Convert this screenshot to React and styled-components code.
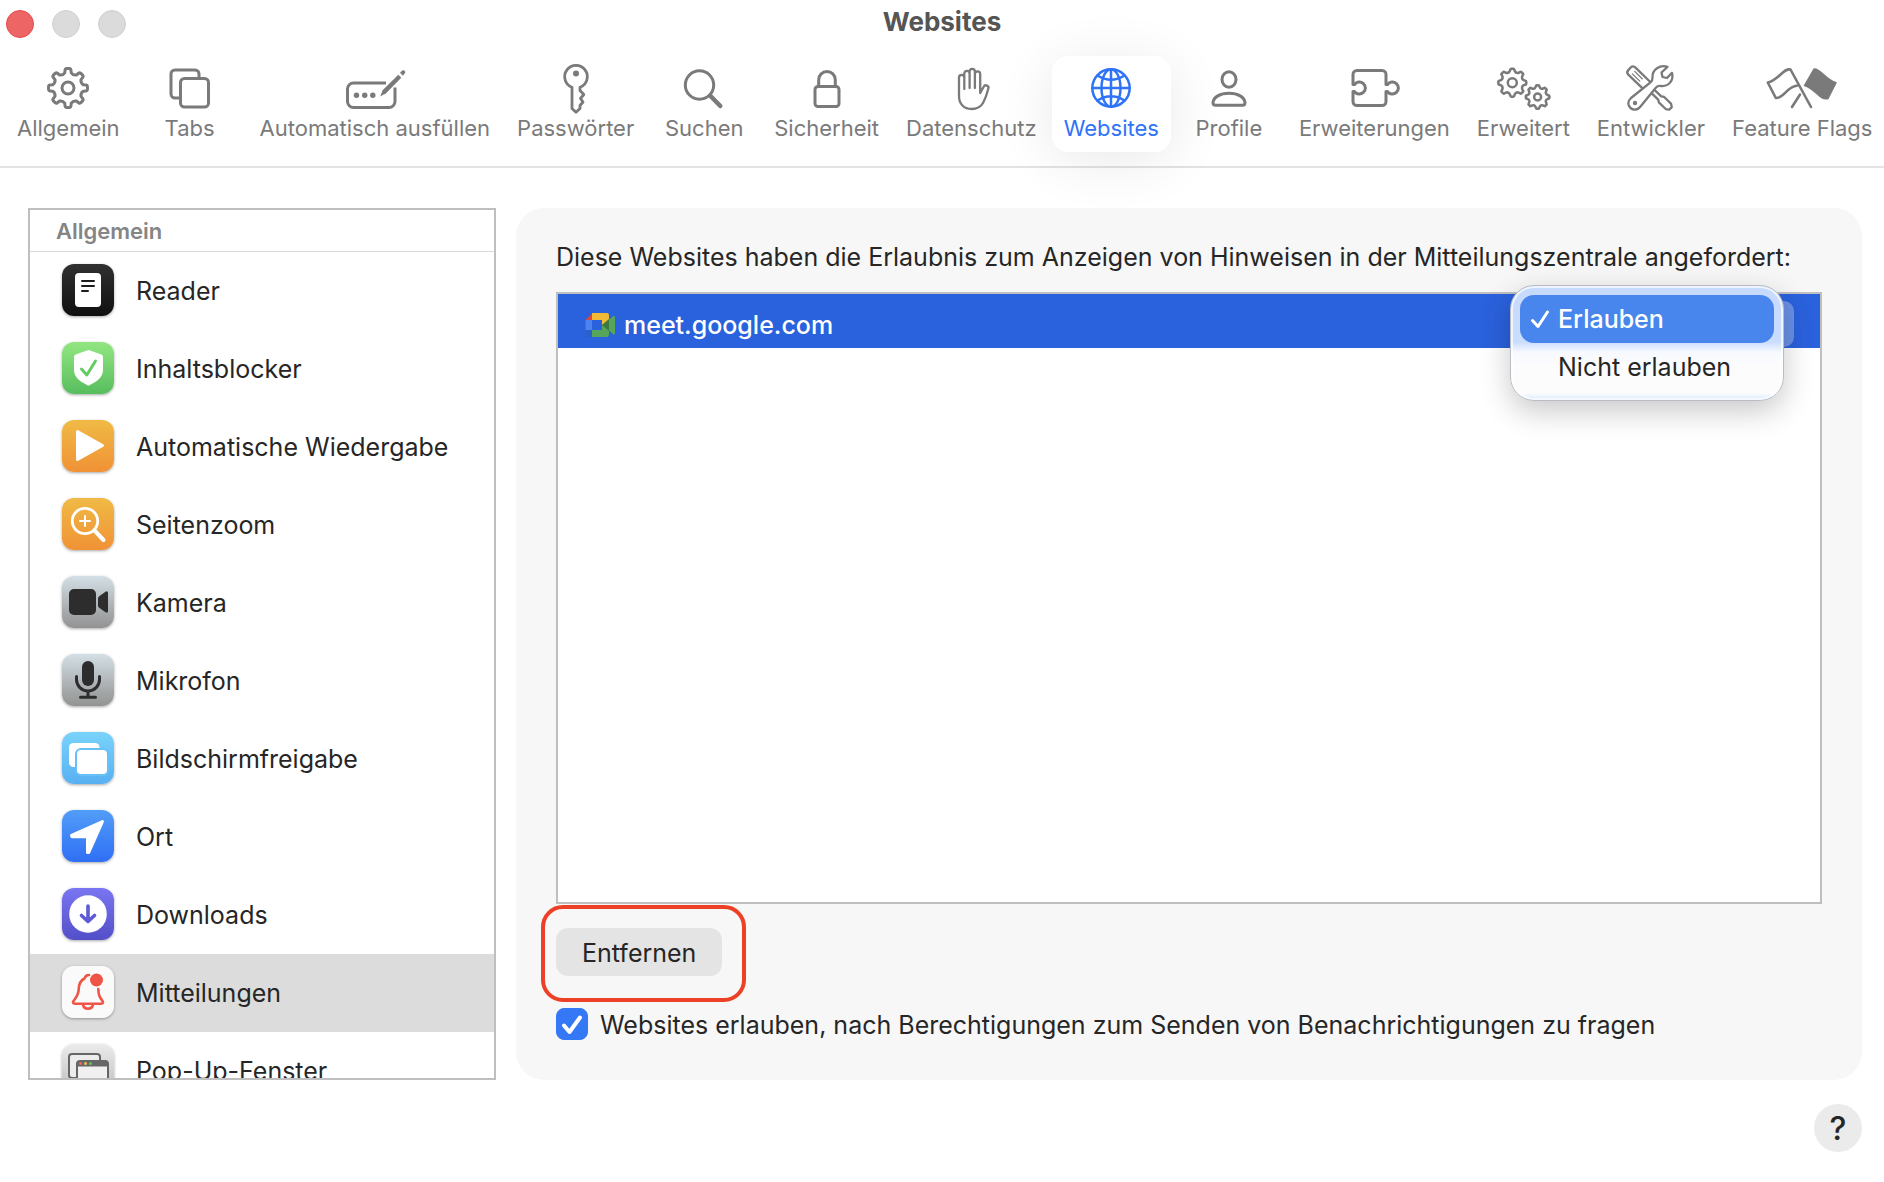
import React, { useState } from 'react';
import styled, { createGlobalStyle, css } from 'styled-components';

const GlobalStyle = createGlobalStyle`
  *, *::before, *::after { box-sizing: border-box; }
  body {
    margin: 0;
    background: #fff;
    color: #262626;
    font-family: Inter, "Liberation Sans", sans-serif;
    font-size: 25px;
    line-height: 32px;
  }
  button, select, input { font: inherit; color: inherit; margin: 0; }
`;

/* ---------- window ---------- */

const Window = styled.div`
  display: flex;
  flex-direction: column;
  height: 100vh;
  min-height: 640px;
`;

const TitleBar = styled.header`
  display: grid;
  grid-template-columns: 1fr auto 1fr;
  align-items: center;
  height: 48px;
  padding: 0 6px;
`;

const Lights = styled.div`
  display: flex;
  gap: 18px;
`;

const Light = styled.button`
  width: 28px;
  height: 28px;
  padding: 0;
  border: 1px solid ${(p) => (p.$close ? '#e5484a' : '#d0d0d0')};
  border-radius: 50%;
  background: ${(p) => (p.$close ? '#ed6665' : '#dbdbdb')};
`;

const Title = styled.h1`
  margin: 0;
  padding-bottom: 4px;
  color: #555;
  font-size: 26px;
  font-weight: 700;
  line-height: 32px;
`;

/* ---------- toolbar ---------- */

const Toolbar = styled.nav`
  display: flex;
  gap: 3px;
  padding: 8px 0 14px 5px;
  border-bottom: 2px solid #e3e3e3;
`;

const ToolButton = styled.button`
  display: flex;
  flex: none;
  flex-direction: column;
  align-items: center;
  gap: 2px;
  min-width: 110px;
  height: 96px;
  padding: 8px 12px;
  border: 0;
  border-radius: 16px;
  background: transparent;
  color: #7a7a7a;
  font-size: 22px;
  line-height: 28px;
  white-space: nowrap;
  ${(p) =>
    p.$active &&
    css`
      background: #fff;
      color: #2f73f6;
      box-shadow: 0 8px 56px rgba(0, 0, 0, 0.09);
    `}
`;

const ToolIcon = styled.svg`
  flex: none;
  width: 72px;
  height: 48px;
  overflow: visible;
  fill: none;
  stroke: currentColor;
  stroke-width: 3;
  stroke-linecap: round;
  stroke-linejoin: round;
`;

/* ---------- content ---------- */

const Content = styled.main`
  display: grid;
  grid-template-columns: 468px minmax(0, 1fr);
  gap: 20px;
  flex: 1;
  min-height: 0;
  padding: 40px 22px 0 28px;
`;

const Sidebar = styled.aside`
  display: flex;
  flex-direction: column;
  min-height: 0;
  border: 2px solid #bfbfbf;
  background: #fff;
`;

const SidebarHeading = styled.h2`
  flex: none;
  margin: 0;
  padding: 7px 26px 6px;
  border-bottom: 1px solid #dadada;
  color: #858585;
  font-size: 22px;
  font-weight: 600;
  line-height: 28px;
`;

const SidebarList = styled.ul`
  flex: 1;
  min-height: 0;
  margin: 0;
  padding: 0;
  list-style: none;
  overflow-y: auto;
  scrollbar-width: none;
`;

const SidebarRow = styled.button`
  display: flex;
  align-items: center;
  gap: 22px;
  width: 100%;
  height: 78px;
  padding: 0 32px 2px;
  border: 0;
  background: ${(p) => (p.$active ? '#dcdcdc' : 'transparent')};
  text-align: left;
  white-space: nowrap;
`;

const Tile = styled.span`
  flex: none;
  width: 52px;
  height: 52px;
  border-radius: 12px;
  background: linear-gradient(${(p) => p.$from}, ${(p) => p.$to});
  box-shadow: 0 1px 3px rgba(0, 0, 0, 0.35);
`;

const TileArt = styled.svg`
  display: block;
  width: 52px;
  height: 52px;
  stroke-linecap: round;
  stroke-linejoin: round;
`;

const RowLabel = styled.span`
  padding-top: 2px;
`;

const Panel = styled.section`
  display: flex;
  flex-direction: column;
  min-width: 0;
  min-height: 0;
  padding: 33px 40px 39px;
  border-radius: 28px;
  background: #f7f7f7;
`;

const PanelText = styled.p`
  margin: 0 0 19px;
`;

const SiteList = styled.ul`
  flex: 1;
  min-height: 0;
  margin: 0;
  padding: 0;
  border: 2px solid #bfbfbf;
  background: #fff;
  list-style: none;
`;

const SiteRow = styled.li`
  display: flex;
  align-items: center;
  justify-content: space-between;
  height: 54px;
  padding: 0 26px 0 27px;
  background: #2a61dc;
  color: #fff;
`;

const SiteName = styled.span`
  display: flex;
  align-items: center;
  gap: 8px;
  padding-top: 7px;
  font-weight: 500;
`;

const Permission = styled.div`
  position: relative;
`;

const PermissionSelect = styled.select`
  display: block;
  width: 282px;
  height: 46px;
  margin-top: 6px;
  padding: 0 32px;
  border: 0;
  border-radius: 10px;
  appearance: none;
  background: rgba(255, 255, 255, 0.3);
  color: transparent;
`;

const Menu = styled.div`
  position: absolute;
  top: -10px;
  right: 10px;
  width: 274px;
  padding: 9px;
  border: 1px solid #b9bcc2;
  border-radius: 24px;
  background: linear-gradient(#c6dafd 0, #cbddfd 56px, #f6f9ff 66px, #fcfcfc 80px, #fcfcfc 107px, #d9eafe 114px);
  box-shadow: 0 10px 30px rgba(0, 0, 0, 0.22), inset 0 0 0 2px rgba(255, 255, 255, 0.7);
`;

const MenuItem = styled.button`
  display: flex;
  align-items: center;
  gap: 8px;
  width: 100%;
  height: 48px;
  padding: 0 10px;
  border: 0;
  border-radius: 14px;
  background: ${(p) => (p.$active ? '#4886ed' : 'transparent')};
  color: ${(p) => (p.$active ? '#fff' : '#262626')};
  font-weight: ${(p) => (p.$active ? 500 : 400)};
  text-align: left;
  white-space: nowrap;
`;

const CheckSlot = styled.svg`
  flex: none;
  width: 20px;
  height: 20px;
  fill: none;
  stroke: currentColor;
  stroke-width: 3;
  stroke-linecap: round;
  stroke-linejoin: round;
`;

const Highlight = styled.div`
  position: relative;
  align-self: flex-start;
  margin: 24px 0 31px;

  &::after {
    content: "";
    position: absolute;
    inset: -23px -24px -26px -15px;
    border: 4px solid #ed4127;
    border-radius: 22px;
    pointer-events: none;
  }
`;

const RemoveButton = styled.button`
  display: block;
  height: 48px;
  padding: 2px 26px 0;
  border: 0;
  border-radius: 12px;
  background: #e4e4e4;
`;

const CheckLabel = styled.label`
  display: flex;
  align-items: center;
  gap: 12px;
`;

const CheckBoxWrap = styled.span`
  display: grid;
  flex: none;
  width: 32px;
  height: 32px;

  > * { grid-area: 1 / 1; }
`;

const CheckBox = styled.input`
  width: 32px;
  height: 32px;
  border: 1px solid #bfbfbf;
  border-radius: 8px;
  appearance: none;
  background: #fff;

  &:checked {
    border-color: #3478f6;
    background: #3478f6;
  }
`;

const CheckMark = styled.svg`
  width: 32px;
  height: 32px;
  fill: none;
  stroke: #fff;
  stroke-width: 4;
  stroke-linecap: round;
  stroke-linejoin: round;
  pointer-events: none;
`;

const Footer = styled.footer`
  display: flex;
  justify-content: flex-end;
  padding: 24px 22px 30px;
`;

const HelpButton = styled.button`
  width: 48px;
  height: 48px;
  padding: 2px 0 0;
  border: 0;
  border-radius: 50%;
  background: #ebebeb;
  font-size: 32px;
  font-weight: 500;
`;

/* ---------- drawings ---------- */

function gearPath(cx, cy, outer, inner, teeth = 8) {
  const step = (Math.PI * 2) / teeth;
  const at = (r, a) => `${(cx + r * Math.sin(a)).toFixed(2)} ${(cy - r * Math.cos(a)).toFixed(2)}`;
  let d = '';
  for (let i = 0; i < teeth; i += 1) {
    const a = i * step;
    d += `${i === 0 ? 'M' : 'L'}${at(outer - 1, a - step * 0.2)}`;
    d += `Q${at(outer, a - step * 0.18)} ${at(outer, a - step * 0.1)}`;
    d += `L${at(outer, a + step * 0.1)}`;
    d += `Q${at(outer, a + step * 0.18)} ${at(outer - 1, a + step * 0.2)}`;
    d += `L${at(inner + 1, a + step * 0.27)}`;
    d += `Q${at(inner - 1, a + step * 0.5)} ${at(inner + 1, a + step * 0.73)}`;
  }
  return `${d}Z`;
}

const toolArt = {
  general: (
    <>
      <path d={gearPath(36, 24, 19.5, 14.5)} />
      <circle cx="36" cy="24" r="6" />
    </>
  ),
  tabs: (
    <>
      <path d="M45 13v-3a4 4 0 0 0-4-4H21a4 4 0 0 0-4 4v20a4 4 0 0 0 4 4h4" />
      <rect x="26.5" y="14.5" width="28" height="28.5" rx="4" />
    </>
  ),
  autofill: (
    <>
      <path d="M47 19H14.500a6 6 0 0 0-6 6v12.500a6 6 0 0 0 6 6H50a6 6 0 0 0 6-6V23.500" strokeLinecap="butt" />
      <g fill="currentColor" stroke="none">
        <circle cx="17.500" cy="31.300" r="2.700" />
        <circle cx="25.700" cy="31.300" r="2.700" />
        <circle cx="33.800" cy="31.300" r="2.700" />
        <path d="M41.200 32.600l2.400-6.400L59.300 10.700l3 3-15.300 15.600z" />
        <path d="M61 8.800l2.200-2.200q1.300-1 2.500.2t.2 2.500l-2 2.400z" />
      </g>
    </>
  ),
  passwords: (
    <>
      <path d="M32 23.300A11.300 11.300 0 1 1 40 23.300V26.500L43.800 30.500 40.500 34.500 43 38 40 41.500V44.500L36 48.300 32 44.500Z" strokeWidth="2.800" />
      <circle cx="36" cy="9.500" r="3" fill="currentColor" stroke="none" />
    </>
  ),
  search: (
    <>
      <circle cx="31.500" cy="21" r="14.200" />
      <path d="M42.500 32L52.300 42" strokeWidth="4.500" />
    </>
  ),
  security: (
    <>
      <rect x="24" y="22.500" width="24" height="20" rx="3" />
      <path d="M27.700 22V15.800a8.300 8.300 0 0 1 16.600 0V22" />
    </>
  ),
  privacy: (
    <path
      strokeWidth="2.300"
      d="M29.300 25V13.500a2.650 2.650 0 0 0-5.300 0V32C24 40 29 45 36.500 45C41.500 45 45.500 43.500 48 39C50.200 35 52 30 53.200 25A2.500 2.500 0 0 0 48.700 22.800L45.200 29V10a2.650 2.650 0 0 0-5.300 0M29.300 15V9.500a2.650 2.650 0 0 1 5.300 0V24M34.600 9.500V7.500a2.650 2.650 0 0 1 5.300 0V24"
    />
  ),
  websites: (
    <g strokeWidth="2.500">
      <circle cx="36" cy="24" r="18.700" />
      <ellipse cx="36" cy="24" rx="9.500" ry="18.700" />
      <path d="M36 5.300V42.700M17.300 24H54.700M22.500 11.500Q36 20 49.500 11.500M22.500 36.500Q36 28 49.500 36.500" />
    </g>
  ),
  profiles: (
    <>
      <ellipse cx="36" cy="15.500" rx="7" ry="7.700" />
      <path d="M22.500 41.300Q20 41.300 20 38.700C20.500 33 27 29.300 36 29.300S51.500 33 52 38.700Q52 41.300 49.500 41.300Z" />
    </>
  ),
  extensions: (
    <path d="M15 20.500V10.500a4 4 0 0 1 4-4H44a4 4 0 0 1 4 4V20.500H49.500A6 6 0 1 1 49.500 27.500H48V37.500a4 4 0 0 1-4 4H19a4 4 0 0 1-4-4V27.500H16.500A6 6 0 1 0 16.500 20.500Z" />
  ),
  advanced: (
    <g strokeWidth="2.500">
      <path d={gearPath(25.3, 18.7, 14, 10.8)} />
      <circle cx="25.300" cy="18.700" r="4.500" />
      <path d={gearPath(50.6, 33, 11.8, 9.1)} />
      <circle cx="50.600" cy="33" r="3.500" />
    </g>
  ),
  developer: (
    <g strokeWidth="2.300">
      <g transform="translate(14.500 4.800) rotate(44)">
        <path d="M3.500-5H27V5H3.500Q0 5 0 1.800V-1.800Q0-5 3.500-5Z" />
        <path d="M5.500-1.700H16M5.500 1.700H16" strokeWidth="1.300" />
        <path d="M27-2.200H42L44.500-3.800H54L57-1.800V1.800L54 3.800H44.500L42 2.200H27" />
      </g>
      <path
        fill="#fff"
        d="M52.500 2.800C45 .5 37 5.500 37.500 13.500C37.600 16 37 17 35.500 18.300L16 34C12.500 37 12.500 41.500 15.500 44C18.500 46.500 23 46 25.500 42.500L41 23.500C42 22.300 43.500 21.800 46 22C54 22.700 59 16 57 8.800L52 14L47.500 13L46.500 8.500Z"
      />
      <circle cx="20" cy="39" r="2.200" fill="currentColor" stroke="none" />
    </g>
  ),
  flags: (
    <g strokeWidth="2.600">
      <path d="M45 43L24.500 5.500C18 3.500 12 16.500 1.800 18.500L9.800 34C18 34.500 20 23 31.500 21.500" />
      <path d="M34 30.500L26 43" />
      <path d="M48 5C54 4 60 16 70 18.700L62 34.500C54 37 50 25 38.500 21.500Z" fill="currentColor" strokeWidth="1.500" />
    </g>
  ),
};

const tools = [
  ['general', 'Allgemein'],
  ['tabs', 'Tabs'],
  ['autofill', 'Automatisch ausfüllen'],
  ['passwords', 'Passwörter'],
  ['search', 'Suchen'],
  ['security', 'Sicherheit'],
  ['privacy', 'Datenschutz'],
  ['websites', 'Websites'],
  ['profiles', 'Profile'],
  ['extensions', 'Erweiterungen'],
  ['advanced', 'Erweitert'],
  ['developer', 'Entwickler'],
  ['flags', 'Feature Flags'],
];

const settings = [
  {
    name: 'Reader',
    from: '#303030',
    to: '#101010',
    art: (
      <>
        <rect x="13" y="9" width="26" height="34" rx="4" fill="#fff" />
        <path d="M20 17H32M20 22H32M20 27H26" stroke="#1c1c1c" strokeWidth="2" fill="none" />
      </>
    ),
  },
  {
    name: 'Inhaltsblocker',
    from: '#92e681',
    to: '#58bd5e',
    art: (
      <>
        <path d="M26.500 8L39.500 12.500Q41 13 41 15V28C41 36 34 40 26.500 43.700C19 40 12 36 12 28V15Q12 13 13.500 12.500Z" fill="#fff" />
        <path d="M19.500 27L24.800 33L33.500 19" stroke="#62cd63" strokeWidth="3" fill="none" />
      </>
    ),
  },
  {
    name: 'Automatische Wiedergabe',
    from: '#f0ba45',
    to: '#f09236',
    art: <path d="M15.500 11.500L40.500 25.500L15.500 39.500Z" fill="#fff" stroke="#fff" strokeWidth="3" />,
  },
  {
    name: 'Seitenzoom',
    from: '#f0ba45',
    to: '#f09236',
    art: (
      <g stroke="#fff" fill="none">
        <circle cx="23" cy="23" r="12.700" strokeWidth="2.800" />
        <path d="M32.500 32.500L41.500 42" strokeWidth="4" />
        <path d="M23 18V28M18 23H28" strokeWidth="2" />
      </g>
    ),
  },
  {
    name: 'Kamera',
    from: '#d3dfe5',
    to: '#929292',
    art: (
      <g fill="#2d2d2d">
        <rect x="7" y="13" width="27" height="26" rx="5" />
        <path d="M36 22.500Q36 21 37.500 20L43.500 15.700Q46 14.500 46 17V35Q46 37.500 43.500 36.300L37.500 32Q36 31 36 29.500Z" />
      </g>
    ),
  },
  {
    name: 'Mikrofon',
    from: '#d3dfe5',
    to: '#929292',
    art: (
      <g stroke="#2d2d2d" strokeWidth="3" fill="none">
        <rect x="20" y="7" width="12" height="25" rx="6" fill="#2d2d2d" stroke="none" />
        <path d="M14.500 22.500V25.500a11.500 11.500 0 0 0 23 0V22.500M26 37.500V43M18.500 43.300H33.500" />
      </g>
    ),
  },
  {
    name: 'Bildschirmfreigabe',
    from: '#79d3fa',
    to: '#58b0f1',
    art: (
      <>
        <rect x="7" y="11" width="30.500" height="24" rx="4.500" fill="#fff" />
        <rect x="14" y="17" width="32" height="26" rx="5" fill="#fff" stroke="#67c0f6" strokeWidth="2" />
      </>
    ),
  },
  {
    name: 'Ort',
    from: '#529df8',
    to: '#2f6ff5',
    art: <path d="M9.500 25.300L40.500 11.500L26.800 42.500L25.500 42.500V26.800H10Z" fill="#fff" stroke="#fff" strokeWidth="3" />,
  },
  {
    name: 'Downloads',
    from: '#7a76f2',
    to: '#524fc8',
    art: (
      <>
        <circle cx="26" cy="26" r="18.800" fill="#fff" />
        <path d="M26 18V33.500M19.500 27.500L26 33.500L32.500 27.500" stroke="#5d5ad6" strokeWidth="3.600" fill="none" />
      </>
    ),
  },
  {
    name: 'Mitteilungen',
    from: '#fafafa',
    to: '#fafafa',
    art: (
      <g stroke="#ee5546" strokeWidth="2.600" fill="none">
        <path d="M27 9Q23.500 9 22.500 12.500C18.500 14.500 17 18 16.800 22.500C16.600 29 14.500 31 11.500 35Q10 37.500 13 37.700H39Q42 37.500 40.500 35C37.500 31 36.500 29 36.300 23" />
        <path d="M21 38.500Q21.500 42.700 26 42.700T31 38.500" />
        <circle cx="34.500" cy="14" r="6.500" fill="#ee5546" stroke="none" />
      </g>
    ),
  },
  {
    name: 'Pop-Up-Fenster',
    from: '#ebebeb',
    to: '#b9bbbf',
    art: (
      <>
        <rect x="7" y="10" width="31" height="24" rx="3" fill="#ececec" stroke="#666" strokeWidth="2" />
        <rect x="15" y="17" width="31" height="24" rx="3" fill="#f0f0f0" stroke="#666" strokeWidth="2" />
        <path d="M15 22.500V19a2 2 0 0 1 2-2H44a2 2 0 0 1 2 2V22.500Z" fill="#666" />
        <circle cx="18.500" cy="19.500" r="1.500" fill="#ed6a5e" />
        <circle cx="23.500" cy="19.500" r="1.500" fill="#f4be4f" />
        <circle cx="28.500" cy="19.500" r="1.500" fill="#61c554" />
      </>
    ),
  },
];

const MeetLogo = () => (
  <svg width="31" height="24" viewBox="0 0 31 24" aria-hidden="true">
    <path d="M0.500 7L7.500 0V7Z" fill="#d9483b" />
    <path d="M7 0H22Q24 0 24 2V8L17 12.500V7H7Z" fill="#f1b935" />
    <path d="M0.500 7H7V17H0.500Z" fill="#4c83ee" />
    <path d="M0.500 17H7V24H2.500Q.5 24 .5 22Z" fill="#2d5fc8" />
    <path d="M7 17H17V12L24 17V22Q24 24 22 24H7Z" fill="#57a55a" />
    <path d="M17 12L24 6V18Z" fill="#3a7a41" />
    <path d="M24 6.500L28.500 3Q30 2.500 30 4V20.500Q30 22 28.500 21.500L24 17.500Z" fill="#57a55a" />
  </svg>
);

export default function App() {
  const [pane, setPane] = useState('websites');
  const [setting, setSetting] = useState('Mitteilungen');
  const [permission, setPermission] = useState('Erlauben');
  const [ask, setAsk] = useState(true);

  return (
    <>
      <GlobalStyle />
      <Window>
        <TitleBar>
          <Lights>
            <Light $close aria-label="Schließen" />
            <Light aria-label="Minimieren" />
            <Light aria-label="Zoomen" />
          </Lights>
          <Title>Websites</Title>
        </TitleBar>

        <Toolbar>
          {tools.map(([id, label]) => (
            <ToolButton key={id} $active={pane === id} onClick={() => setPane(id)}>
              <ToolIcon viewBox="0 0 72 48" aria-hidden="true">{toolArt[id]}</ToolIcon>
              {label}
            </ToolButton>
          ))}
        </Toolbar>

        <Content>
          <Sidebar>
            <SidebarHeading>Allgemein</SidebarHeading>
            <SidebarList>
              {settings.map((item) => (
                <li key={item.name}>
                  <SidebarRow $active={setting === item.name} onClick={() => setSetting(item.name)}>
                    <Tile $from={item.from} $to={item.to}>
                      <TileArt viewBox="0 0 52 52" aria-hidden="true">{item.art}</TileArt>
                    </Tile>
                    <RowLabel>{item.name}</RowLabel>
                  </SidebarRow>
                </li>
              ))}
            </SidebarList>
          </Sidebar>

          <Panel>
            <PanelText>
              Diese Websites haben die Erlaubnis zum Anzeigen von Hinweisen in der Mitteilungszentrale angefordert:
            </PanelText>
            <SiteList>
              <SiteRow>
                <SiteName>
                  <MeetLogo />
                  meet.google.com
                </SiteName>
                <Permission>
                  <PermissionSelect
                    aria-label="Berechtigung für meet.google.com"
                    value={permission}
                    onChange={(e) => setPermission(e.target.value)}
                  >
                    <option>Erlauben</option>
                    <option>Nicht erlauben</option>
                  </PermissionSelect>
                  <Menu role="menu">
                    {['Erlauben', 'Nicht erlauben'].map((option) => (
                      <MenuItem
                        key={option}
                        role="menuitemradio"
                        aria-checked={permission === option}
                        $active={permission === option}
                        onClick={() => setPermission(option)}
                      >
                        <CheckSlot viewBox="0 0 20 20" aria-hidden="true">
                          {permission === option && <path d="M2.500 11.500L8 17.500L17.500 3" />}
                        </CheckSlot>
                        {option}
                      </MenuItem>
                    ))}
                  </Menu>
                </Permission>
              </SiteRow>
            </SiteList>
            <Highlight>
              <RemoveButton>Entfernen</RemoveButton>
            </Highlight>
            <CheckLabel>
              <CheckBoxWrap>
                <CheckBox type="checkbox" checked={ask} onChange={(e) => setAsk(e.target.checked)} />
                <CheckMark viewBox="0 0 32 32" aria-hidden="true">
                  <path d="M8 17.500L13.500 24L24 9.500" />
                </CheckMark>
              </CheckBoxWrap>
              <RowLabel>
                Websites erlauben, nach Berechtigungen zum Senden von Benachrichtigungen zu fragen
              </RowLabel>
            </CheckLabel>
          </Panel>
        </Content>

        <Footer>
          <HelpButton aria-label="Hilfe">?</HelpButton>
        </Footer>
      </Window>
    </>
  );
}
